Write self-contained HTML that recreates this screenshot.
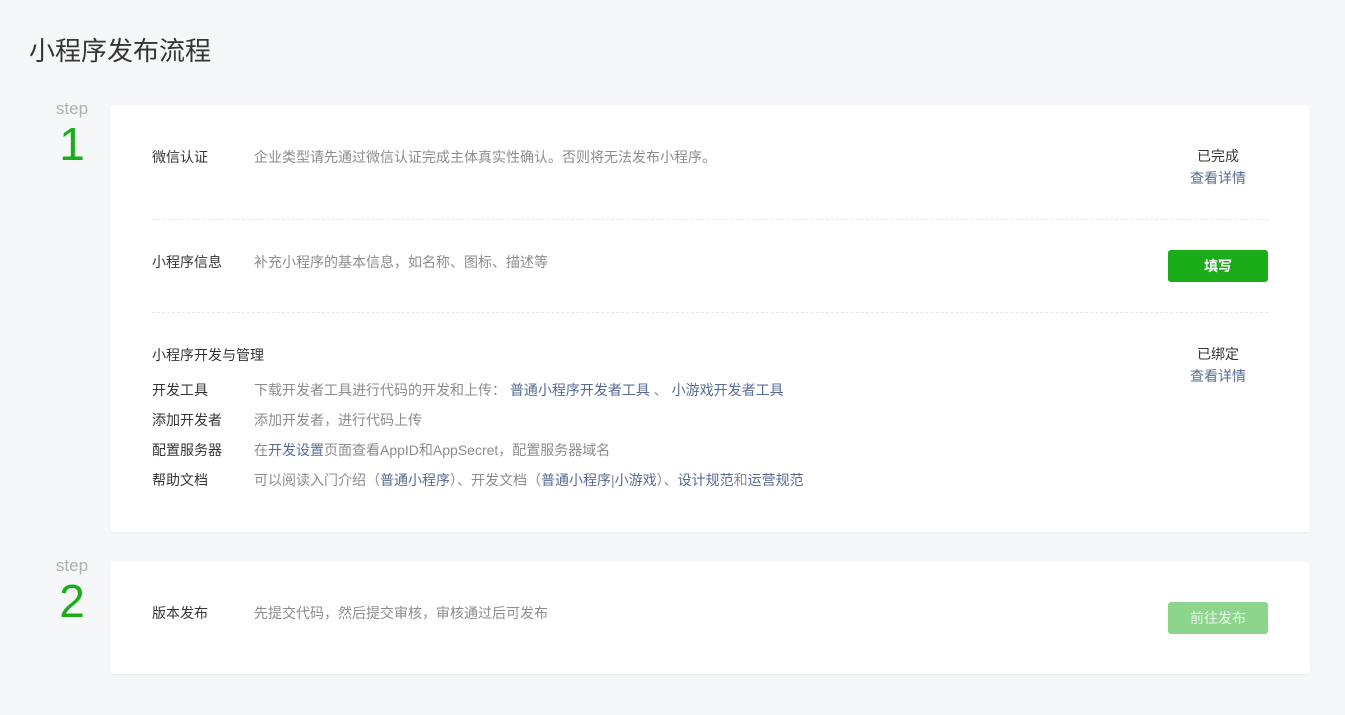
<!DOCTYPE html>
<html><head><meta charset="utf-8"><style>
*{margin:0;padding:0;box-sizing:border-box}
body{width:1345px;height:715px;background:#f6f7f9;font-family:"Liberation Sans","Noto Sans CJK SC",sans-serif;font-size:14px;color:#353535;position:relative;overflow:hidden}
.abs{position:absolute;white-space:nowrap;line-height:16px}
h1{position:absolute;left:29px;top:31px;font-size:26px;font-weight:normal;color:#353535;letter-spacing:0}
.step{position:absolute;left:50px;width:44px;text-align:center;color:#b0b0b0;font-size:17px}
.num{position:absolute;left:50px;width:44px;text-align:center;color:#1aad19;font-size:46px;font-weight:300;line-height:46px}
.card{position:absolute;left:110px;width:1200px;background:#fff;border-radius:3px;box-shadow:0 1px 2px rgba(0,0,0,.06)}
.lab{color:#353535}
.desc{color:#8d8d8d}
a{color:#576b95;text-decoration:none}
.sep{position:absolute;left:152px;width:1116px;border-top:1px dashed #e7e7eb}
.r{position:absolute;width:100px;left:1168px;text-align:center;line-height:22px}
.btn{position:absolute;left:1168px;width:100px;height:32px;line-height:32px;text-align:center;color:#fff;border-radius:3px;font-size:14px}
</style></head><body>
<h1>小程序发布流程</h1>
<div class="step" style="top:99px">step</div>
<div class="num" style="top:121px">1</div>
<div class="card" style="top:105px;height:427px"></div>
<div class="step" style="top:556px">step</div>
<div class="num" style="top:578px">2</div>
<div class="card" style="top:562px;height:112px"></div>

<div class="abs lab" style="left:152px;top:149px">微信认证</div>
<div class="abs desc" style="left:254px;top:149px">企业类型请先通过微信认证完成主体真实性确认。否则将无法发布小程序。</div>
<div class="r" style="top:145px">已完成<br><a>查看详情</a></div>
<div class="sep" style="top:219px"></div>

<div class="abs lab" style="left:152px;top:254px">小程序信息</div>
<div class="abs desc" style="left:254px;top:254px">补充小程序的基本信息，如名称、图标、描述等</div>
<div class="btn" style="top:250px;background:#1aad19;font-weight:bold">填写</div>
<div class="sep" style="top:312px"></div>

<div class="abs lab" style="left:152px;top:347px">小程序开发与管理</div>
<div class="r" style="top:343px">已绑定<br><a>查看详情</a></div>
<div class="abs lab" style="left:152px;top:382px">开发工具</div>
<div class="abs desc" style="left:254px;top:382px">下载开发者工具进行代码的开发和上传： <a>普通小程序开发者工具</a> 、 <a>小游戏开发者工具</a></div>
<div class="abs lab" style="left:152px;top:412px">添加开发者</div>
<div class="abs desc" style="left:254px;top:412px">添加开发者，进行代码上传</div>
<div class="abs lab" style="left:152px;top:442px">配置服务器</div>
<div class="abs desc" style="left:254px;top:442px">在<a>开发设置</a>页面查看AppID和AppSecret，配置服务器域名</div>
<div class="abs lab" style="left:152px;top:472px">帮助文档</div>
<div class="abs desc" style="left:254px;top:472px">可以阅读入门介绍（<a>普通小程序</a>）、开发文档（<a>普通小程序</a>|<a>小游戏</a>）、<a>设计规范</a>和<a>运营规范</a></div>

<div class="abs lab" style="left:152px;top:605px">版本发布</div>
<div class="abs desc" style="left:254px;top:605px">先提交代码，然后提交审核，审核通过后可发布</div>
<div class="btn" style="top:602px;background:#8dd58c;color:#e8f7e8">前往发布</div>
</body></html>
